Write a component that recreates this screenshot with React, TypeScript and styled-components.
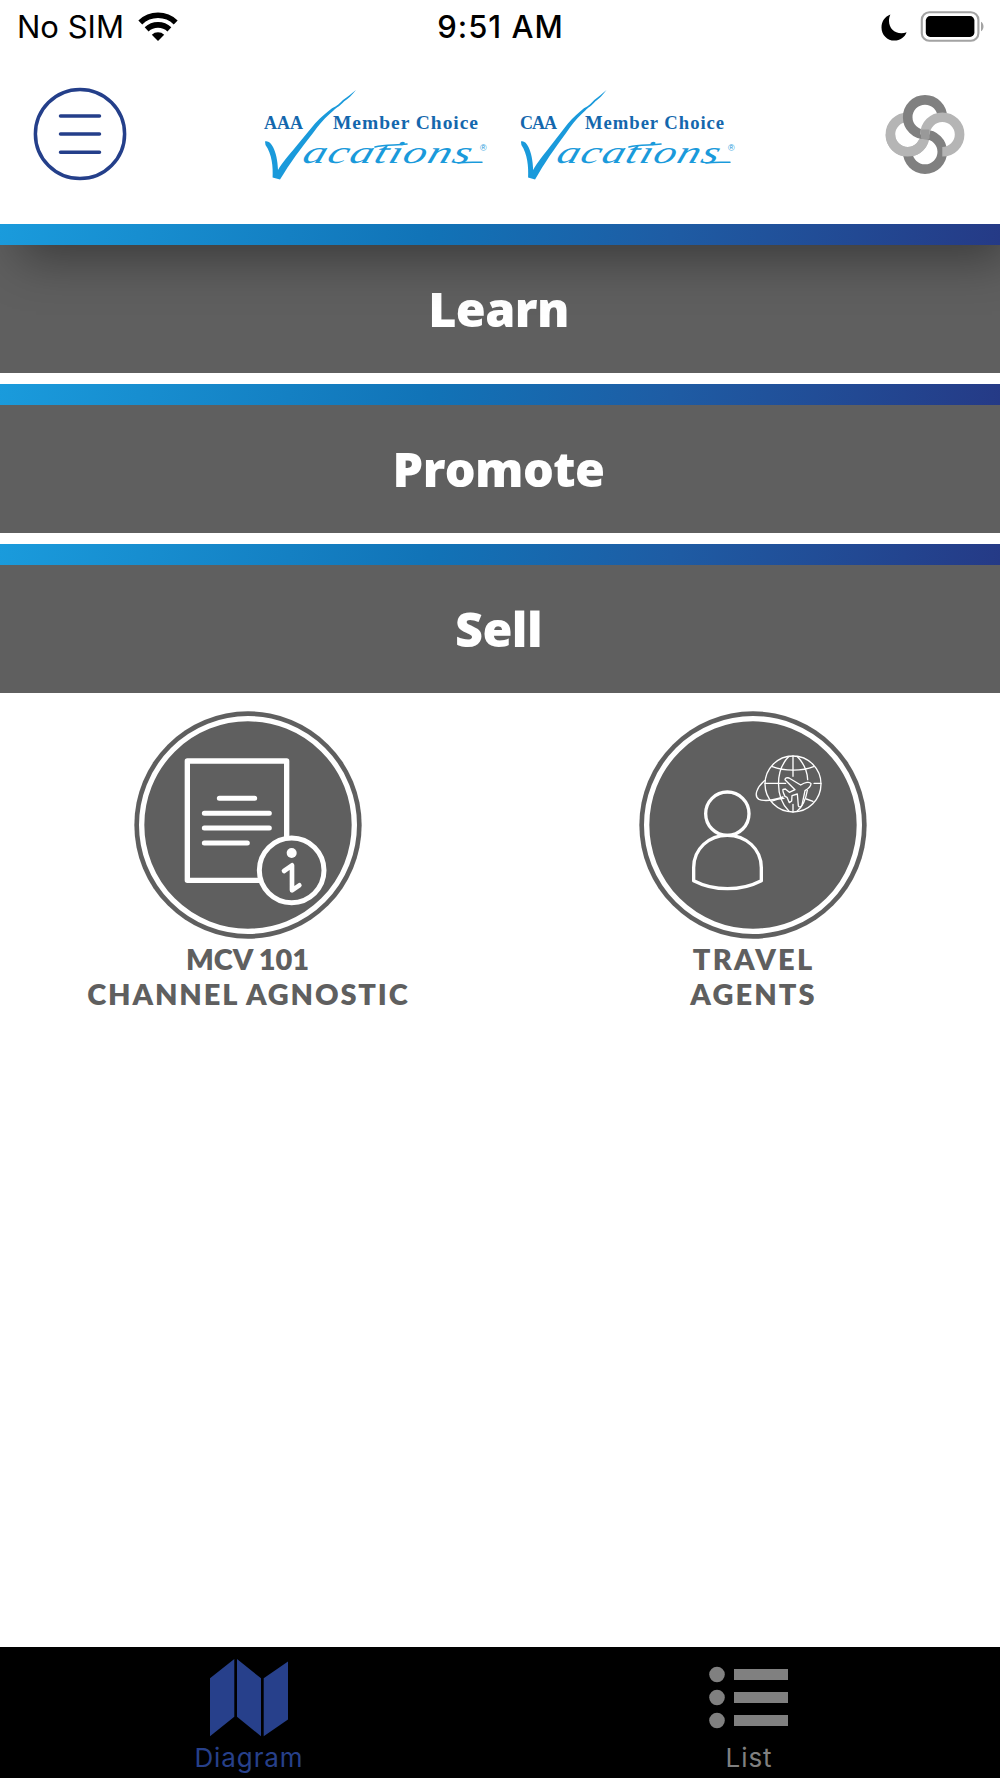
import React from "react";
import styled, { createGlobalStyle } from "styled-components";

const GlobalStyle = createGlobalStyle`
  html, body { margin: 0; padding: 0; background: #fff; }
  *, *::before, *::after { box-sizing: border-box; }
`;

const Screen = styled.div`
  width: 1000px;
  height: 1778px;
  display: flex;
  flex-direction: column;
  background: #fff;
  overflow: hidden;
  font-family: Inter, "Liberation Sans", sans-serif;
`;

const Header = styled.header`
  position: relative;
  z-index: 1;
  flex: none;
  background: #fff;
  box-shadow: 14px 20px 46px -6px rgba(0, 0, 0, 0.38);
`;

const StatusBar = styled.div`
  display: grid;
  grid-template-columns: 1fr auto 1fr;
  align-items: center;
  height: 54px;
  padding: 0 16px 0 17px;
`;

const StatusGroup = styled.div<{ $end?: boolean }>`
  display: flex;
  align-items: center;
  justify-content: ${(p) => (p.$end ? "flex-end" : "flex-start")};
  gap: ${(p) => (p.$end ? 13 : 14)}px;
`;

const StatusText = styled.span<{ $weight: number; $spacing: number }>`
  font-size: 31px;
  line-height: 54px;
  font-weight: ${(p) => p.$weight};
  letter-spacing: ${(p) => p.$spacing}px;
  color: #000;
  white-space: nowrap;
`;

const NavRow = styled.div`
  display: flex;
  align-items: center;
  justify-content: space-between;
  height: 169.5px;
  padding: 0 33px 10px 33px;
`;

const IconButton = styled.button`
  display: block;
  padding: 0;
  border: 0;
  background: none;
  line-height: 0;
`;

const Logos = styled.div`
  display: flex;
  margin: 4px 13px 0 0;
`;

const Accent = styled.div`
  height: 21.5px;
  background: linear-gradient(100deg, #1a9bdc 0%, #1173b7 43%, #1e5ca4 67%, #253a86 100%);
`;

const Sections = styled.main`
  display: flex;
  flex-direction: column;
  gap: 10.5px;
  flex: 1;
`;

const SectionTitle = styled.h2`
  margin: 0;
  height: 128px;
  display: flex;
  align-items: center;
  justify-content: center;
  background: #5f5f5f;
  color: #fff;
  font: 800 48.5px/66px "Open Sans", "Noto Sans", sans-serif;
  letter-spacing: -0.6px;
  padding: 0 3px 2px 0;
`;

const Tiles = styled.div`
  display: grid;
  grid-template-columns: 1fr 1fr;
  gap: 10px;
  padding-top: 18px;
`;

const Tile = styled.div`
  display: flex;
  flex-direction: column;
  align-items: center;
`;

const TileLabel = styled.div`
  display: flex;
  flex-direction: column;
  align-items: center;
  margin-top: 2px;
  color: #5f5f5f;
  font: 800 29px/35px Lato, "Open Sans", sans-serif;
`;

const LabelLine = styled.span<{ $spacing: number }>`
  letter-spacing: ${(p) => p.$spacing}px;
  margin-right: ${(p) => -p.$spacing}px;
  white-space: nowrap;
`;

const TabBar = styled.nav`
  flex: none;
  height: 131.5px;
  display: grid;
  grid-template-columns: 1fr 1fr;
  background: #000;
`;

const Tab = styled.a<{ $color: string }>`
  display: flex;
  flex-direction: column;
  align-items: center;
  color: ${(p) => p.$color};
  padding: 12px 2px 0 0;
`;

const TabLabel = styled.span`
  font-size: 26px;
  line-height: 34px;
  letter-spacing: 0.9px;
  margin-top: 3px;
`;

const WifiIcon = () => (
  <svg width="40" height="30" viewBox="0 0 40 30" fill="none" stroke="#000">
    <path d="M2.3 10.4 A25.5 25.5 0 0 1 37.7 10.4" strokeWidth="5.6" />
    <path d="M8.6 17.4 A16.6 16.6 0 0 1 31.4 17.4" strokeWidth="5.6" />
    <path d="M20 29 L13.8 22.8 A9 9 0 0 1 26.2 22.8 Z" fill="#000" stroke="none" />
  </svg>
);

const MoonIcon = () => (
  <svg width="26" height="27" viewBox="0 0 26 27">
    <path d="M9.4 .5 C3.8 2.6 .5 7.6 .5 13.4 C.5 20.8 6.2 26.6 13.5 26.6 C19 26.6 23.8 23.2 25.6 18.2 C24 18.9 22.2 19.2 20.4 19.2 C13.2 19.2 8 14 8 7 C8 4.7 8.5 2.4 9.4 .5 Z" />
  </svg>
);

const BatteryIcon = () => (
  <svg width="64" height="32" viewBox="0 0 64 32">
    <rect x="1.8" y="1.2" width="56.6" height="28.6" rx="7.5" fill="none" stroke="#a3a3a3" strokeWidth="2.1" />
    <rect x="5.8" y="5.1" width="48.6" height="20.8" rx="4.4" fill="#000" />
    <path d="M61 10.8 C64.3 12.3 64.3 18.7 61 20.2 Z" fill="#a3a3a3" />
  </svg>
);

const MenuIcon = () => (
  <svg width="94" height="94" viewBox="0 0 94 94" fill="none" stroke="#243f8a" strokeWidth="3.5">
    <circle cx="47" cy="47" r="44.6" />
    <path d="M27.5 29 H66.5 M27.5 47 H66.5 M27.5 65.2 H66.5" strokeLinecap="round" />
  </svg>
);

const KnotIcon = () => (
  <svg width="82" height="82" viewBox="0 0 82 82" fill="none" strokeWidth="9.6">
    <path d="M40 41.5 A17.3 17.3 0 1 1 22.7 24.2" stroke="#b5b5b5" />
    <path d="M57.3 24.2 A17.3 17.3 0 1 0 40 41.5 A17.3 17.3 0 1 1 22.7 58.8" stroke="#808080" />
    <path d="M5.4 41.5 A17.3 17.3 0 0 0 22.7 58.8 C30 58.8 35.5 55 38.4 48.6" stroke="#b5b5b5" />
    <path d="M40 41.5 A17.3 17.3 0 1 1 57.3 58.8" stroke="#b5b5b5" />
    <rect x="36" y="36.5" width="8.5" height="9.5" rx="1" fill="#999" stroke="none" />
  </svg>
);

type LogoProps = {
  club: string;
  clubWidth: number;
  x: number;
  nameX: number;
  nameWidth: number;
  scriptX: number;
  scriptWidth: number;
  checkScale: number;
};

const VacationsLogo = ({ club, clubWidth, x, nameX, nameWidth, scriptX, scriptWidth, checkScale }: LogoProps) => (
  <svg width="250" height="100" viewBox="0 0 250 100">
    <g fill="#1467ad" fontFamily="'Liberation Serif', serif" fontWeight="700" fontSize="18">
      <text x={x} y="43" textLength={clubWidth}>{club}</text>
      <text x={nameX} y="43" textLength={nameWidth} lengthAdjust="spacingAndGlyphs" letterSpacing="0.9">Member Choice</text>
    </g>
    <path
      transform={`translate(${x} 0) scale(${checkScale} 1)`}
      fill="#1a9adb"
      d="M1 55.5 C4 54.5 7 57 9 61 C12 67 13.6 74 14 84 C18 77 25 69 32 60.5 L51 37.5 C57 31 62 27 68 22.3 C73 20 76 17 79 14 C83 11 88 7.5 92 4 C88 9 84 13 80 15.5 C76 20 73 21 69.5 24.5 C64 29 58 35 53.3 41.3 C47 50 41 57 36 64 C30 72 25 79 19.5 88 L16 93.5 L8.6 91.5 C9.2 81 8 68 1.5 59 Z"
    />
    <g fill="#1a9adb">
      <text
        transform="translate(0 77) skewX(-18)"
        x={scriptX}
        y="0"
        fontFamily="'Liberation Serif', serif"
        fontStyle="italic"
        fontSize="32"
        textLength={scriptWidth}
        lengthAdjust="spacingAndGlyphs"
        letterSpacing="1"
      >
        acations
      </text>
      <text x={scriptX + scriptWidth + 10} y="65" fontFamily="'Liberation Sans', sans-serif" fontSize="9">®</text>
    </g>
    <g fill="none" stroke="#1a9adb" strokeLinecap="round" transform={`translate(${scriptX} 0)`}>
      <path d="M74 61 C84 58.5 96 59.5 106 58" strokeWidth="1.6" />
      <path d={`M${scriptWidth - 12} 77 C${scriptWidth - 4} 76 ${scriptWidth + 4} 76.6 ${scriptWidth + 12} 76.2`} strokeWidth="1.5" />
    </g>
  </svg>
);

const TileSvg = ({ children }: { children: React.ReactNode }) => (
  <svg width="228" height="228" viewBox="40 32 684 684" fill="none" stroke="#fff" strokeLinejoin="round" strokeLinecap="round">
    <circle cx="382" cy="374" r="341" fill="#5f5f5f" stroke="none" />
    <circle cx="382" cy="374" r="319" strokeWidth="16" />
    {children}
  </svg>
);

const DocumentInfoIcon = () => (
  <TileSvg>
    <rect x="200" y="182" width="298" height="358" strokeWidth="16" />
    <path d="M296 294 H402 M251 339 H446 M251 383 H446 M251 428 H380" strokeWidth="15" />
    <circle cx="513" cy="510" r="97" strokeWidth="15" fill="#5f5f5f" />
    <circle cx="513" cy="458" r="15" fill="#fff" stroke="none" />
    <path d="M490 512 L514 495 V570 L536 555" strokeWidth="14" />
  </TileSvg>
);

const TravelAgentIcon = () => (
  <TileSvg>
    <circle cx="305" cy="340" r="65" strokeWidth="10" />
    <path d="M204 541 V502 C204 445 250 405 305 405 C360 405 407 445 407 502 V541 C345 573 266 573 204 541 Z" strokeWidth="10" />
    <g strokeWidth="4">
      <circle cx="502" cy="251" r="84" />
      <path d="M502 167 V228 M502 312 V335 M418 249 H480 M565 249 H586" />
      <path d="M490 168 C448 210 448 290 490 333 M514 168 C536 190 545 215 546 238 M545 270 C540 300 530 320 514 333" />
      <path d="M440 199 C475 213 530 213 564 199 M440 302 C455 295 465 294 475 294 M542 296 L562 303" />
      <path d="M418 240 C392 262 384 287 400 297 C418 304 446 299 472 290" />
      <path d="M478 288 C474 280 470 273 472 267 L479 266 L491 276 L508 268 L478 238 C479 233 484 231 490 233 L525 254 C538 246 552 243 556 250 C556 258 546 266 538 271 L529 314 C527 320 520 322 518 316 L515 281 L499 286 L498 302 L491 307 L484 291 Z" />
    </g>
  </TileSvg>
);

const MapIcon = () => (
  <svg width="78" height="79" viewBox="0 0 78 79" fill="currentColor">
    <path d="M0 19.3 L24.3 0 V57.8 L0 77.3 Z M27 0 L51 19.3 V77.3 L27 57.8 Z M53.7 19.3 L78 2.5 V60.5 L53.7 77.3 Z" />
  </svg>
);

const ListIcon = () => (
  <svg width="80" height="79" viewBox="0 0 80 79" fill="currentColor">
    {[15.5, 38.5, 61.5].map((y) => (
      <React.Fragment key={y}>
        <circle cx="8" cy={y} r="7.8" />
        <rect x="25" y={y - 5.5} width="54" height="11" />
      </React.Fragment>
    ))}
  </svg>
);

export default function App() {
  return (
    <>
      <GlobalStyle />
      <Screen>
        <Header>
          <StatusBar>
            <StatusGroup>
              <StatusText $weight={400} $spacing={0}>No SIM</StatusText>
              <WifiIcon />
            </StatusGroup>
            <StatusText $weight={500} $spacing={1}>9:51 AM</StatusText>
            <StatusGroup $end>
              <MoonIcon />
              <BatteryIcon />
            </StatusGroup>
          </StatusBar>
          <NavRow>
            <IconButton aria-label="Menu"><MenuIcon /></IconButton>
            <Logos>
              <VacationsLogo club="AAA" clubWidth={39} x={14} nameX={83} nameWidth={146} scriptX={51} scriptWidth={169} checkScale={1} />
              <VacationsLogo club="CAA" clubWidth={37} x={20} nameX={85} nameWidth={140} scriptX={55} scriptWidth={163} checkScale={0.94} />
            </Logos>
            <IconButton aria-label="Connections"><KnotIcon /></IconButton>
          </NavRow>
          <Accent />
        </Header>
        <Sections>
          <section>
            <SectionTitle>Learn</SectionTitle>
          </section>
          <section>
            <Accent />
            <SectionTitle>Promote</SectionTitle>
          </section>
          <section>
            <Accent />
            <SectionTitle>Sell</SectionTitle>
            <Tiles>
              <Tile>
                <DocumentInfoIcon />
                <TileLabel>
                  <LabelLine $spacing={-0.1}>MCV 101</LabelLine>
                  <LabelLine $spacing={1.85}>CHANNEL AGNOSTIC</LabelLine>
                </TileLabel>
              </Tile>
              <Tile>
                <TravelAgentIcon />
                <TileLabel>
                  <LabelLine $spacing={2.3}>TRAVEL</LabelLine>
                  <LabelLine $spacing={2.1}>AGENTS</LabelLine>
                </TileLabel>
              </Tile>
            </Tiles>
          </section>
        </Sections>
        <TabBar>
          <Tab $color="#27408b"><MapIcon /><TabLabel>Diagram</TabLabel></Tab>
          <Tab $color="#808080"><ListIcon /><TabLabel>List</TabLabel></Tab>
        </TabBar>
      </Screen>
    </>
  );
}
